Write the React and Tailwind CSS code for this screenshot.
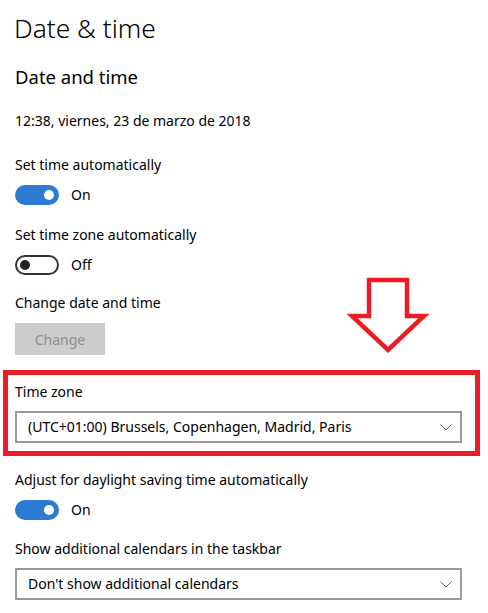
export default function App() {
  const Chevron = () => (
    <svg width="12" height="7" viewBox="0 0 12 7" className="shrink-0">
      <polyline points="0.5,0.5 6,6 11.5,0.5" fill="none" stroke="#666" strokeWidth="1" />
    </svg>
  );
  const ToggleOn = () => (
    <div className="flex items-center gap-[12px] h-[20px]">
      <div className="w-[44px] h-[20px] rounded-full bg-[#2b7bd3] flex items-center justify-end pr-[5px]">
        <div className="w-[10px] h-[10px] rounded-full bg-white" />
      </div>
      <span className="text-[14px] leading-[20px]">On</span>
    </div>
  );
  const ToggleOff = () => (
    <div className="flex items-center gap-[12px] h-[20px]">
      <div className="w-[44px] h-[20px] rounded-full border-2 border-[#333] flex items-center pl-[3px]">
        <div className="w-[10px] h-[10px] rounded-full bg-[#222]" />
      </div>
      <span className="text-[14px] leading-[20px]">Off</span>
    </div>
  );
  const Select = ({ text }) => (
    <div className="w-[447px] h-[32px] border-2 border-[#999] flex items-center justify-between pl-[11px] pr-[8px]">
      <span className="text-[14px] leading-[20px]">{text}</span>
      <Chevron />
    </div>
  );
  return (
    <div className="relative w-[488px] h-[613px] bg-white overflow-hidden text-black font-['Noto_Sans','Open_Sans',sans-serif]">
      <div className="pl-[15px] flex flex-col items-start">
        <h1 className="pt-[10px] ml-[-1px] text-[26.3px] leading-[36px] font-light">Date &amp; time</h1>
        <h2 className="mt-[16px] pt-[1px] text-[18.5px] leading-[28px] font-normal">Date and time</h2>
        <p className="mt-[20px] text-[14px] leading-[20px]">12:38, viernes, 23 de marzo de 2018</p>

        <p className="mt-[24px] text-[14px] leading-[20px]">Set time automatically</p>
        <div className="mt-[10px]"><ToggleOn /></div>

        <p className="mt-[20px] text-[14px] leading-[20px]">Set time zone automatically</p>
        <div className="mt-[10px]"><ToggleOff /></div>

        <p className="mt-[18px] text-[14px] leading-[20px]">Change date and time</p>
        <div className="mt-[10px] w-[90px] h-[32px] bg-[#cccccc] flex items-center justify-center text-[14px] text-[#8f8f8f]">Change</div>

        <div className="mt-[15px] ml-[-12px] w-[477px] border-[5px] border-[#ed1c24] pl-[7px] pt-[7px] pb-[8px]">
          <p className="text-[14px] leading-[20px]">Time zone</p>
          <div className="mt-[9px]"><Select text="(UTC+01:00) Brussels, Copenhagen, Madrid, Paris" /></div>
        </div>

        <p className="mt-[14px] text-[14px] leading-[20px]">Adjust for daylight saving time automatically</p>
        <div className="mt-[10px]"><ToggleOn /></div>

        <p className="mt-[19px] text-[14px] leading-[20px]">Show additional calendars in the taskbar</p>
        <div className="mt-[9px]"><Select text="Don't show additional calendars" /></div>
      </div>

      <svg className="absolute left-[340px] top-[270px]" width="100" height="90" viewBox="0 0 100 90">
        <polygon points="29,10 67,10 67,46 84,46 48,80 12,46 29,46" fill="none" stroke="#ed1c24" strokeWidth="4.5" strokeLinejoin="miter" />
      </svg>
    </div>
  );
}
